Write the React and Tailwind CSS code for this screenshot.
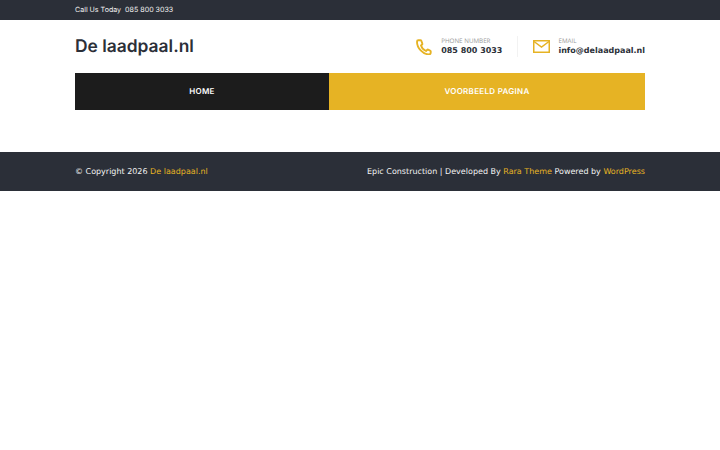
import React from 'react';

const Phone = () => (
  <svg width="16" height="16" viewBox="0 0 24 24" fill="none" stroke="#e6b324" strokeWidth="2.8" strokeLinecap="round" strokeLinejoin="round" className="shrink-0">
    <path d="M3.500 1.800h3.300c.6 0 1 .4 1.200.9l1.500 4.300c.2.500 0 1-.4 1.300L7.500 9.800c1.300 4 4 6.800 7.500 8.200l1.700-1.800c.4-.4.900-.5 1.400-.3l3.200 1.400c.5.200.8.700.8 1.200v1.900c0 1.500-1.200 2.700-2.700 2.700C10.300 22.800 1.500 13.700 1.500 4c0-1.300.8-2.200 2-2.200z" />
  </svg>
);

const Mail = () => (
  <svg width="17" height="13" viewBox="0 0 17 13" fill="none" stroke="#e6b324" strokeWidth="1.500" className="shrink-0">
    <rect x="0.75" y="0.75" width="15.5" height="11.5" />
    <path d="M1 1.500l7.500 5.500 7.500-5.500" />
  </svg>
);

const App = () => {
  return (
    <div className="w-[720px] h-[450px] bg-white overflow-hidden font-['DejaVu_Sans',sans-serif] [text-rendering:geometricPrecision]">
      {/* top bar */}
      <div className="h-5 bg-[#2b2f38] pl-[75px] pt-px flex items-center">
        <span className="text-[7.1px] text-[#f0f0f0] font-['Inter',sans-serif] whitespace-pre">Call Us Today  085 800 3033</span>
      </div>

      {/* header */}
      <div className="mx-[75px] h-[53px] flex items-center justify-between">
        <div className="mt-[2px] text-[17.4px] font-semibold text-[#2b2f38] font-['Inter',sans-serif]">De laadpaal.nl</div>
        <div className="flex items-center">
          <div className="flex items-center gap-[9px] pr-[15px] border-r border-[#f2f2f2]">
            <Phone />
            <div>
              <div className="text-[6.25px] leading-[9px] text-[#9a9a9a] font-['Open_Sans',sans-serif]">PHONE NUMBER</div>
              <div className="text-[8px] leading-[12px] font-bold text-[#2b2f38]">085 800 3033</div>
            </div>
          </div>
          <div className="flex items-center gap-2 pl-[15px]">
            <Mail />
            <div>
              <div className="text-[6.25px] leading-[9px] text-[#9a9a9a] font-['Open_Sans',sans-serif]">EMAIL</div>
              <div className="text-[8px] leading-[12px] font-bold text-[#2b2f38]">info@delaadpaal.nl</div>
            </div>
          </div>
        </div>
      </div>

      {/* nav */}
      <div className="mx-[75px] h-[36.5px] flex text-white text-[8px] font-semibold font-['Inter',sans-serif] tracking-[0.3px]">
        <div className="w-[254px] bg-[#1c1c1c] flex items-center justify-center">HOME</div>
        <div className="flex-1 bg-[#e6b324] flex items-center justify-center">VOORBEELD PAGINA</div>
      </div>

      <div className="h-[42.5px]" />

      {/* footer */}
      <div className="h-[39px] bg-[#2b2f38] px-[75px] pt-px flex items-center justify-between text-[8px] text-[#f2f2f2]">
        <div>
          © Copyright 2026 <span className="text-[#e6b324]">De laadpaal.nl</span>
        </div>
        <div>
          Epic Construction | Developed By <span className="text-[#e6b324]">Rara Theme</span> Powered by{' '}
          <span className="text-[#e6b324]">WordPress</span>
        </div>
      </div>
    </div>
  );
};

export default App;
